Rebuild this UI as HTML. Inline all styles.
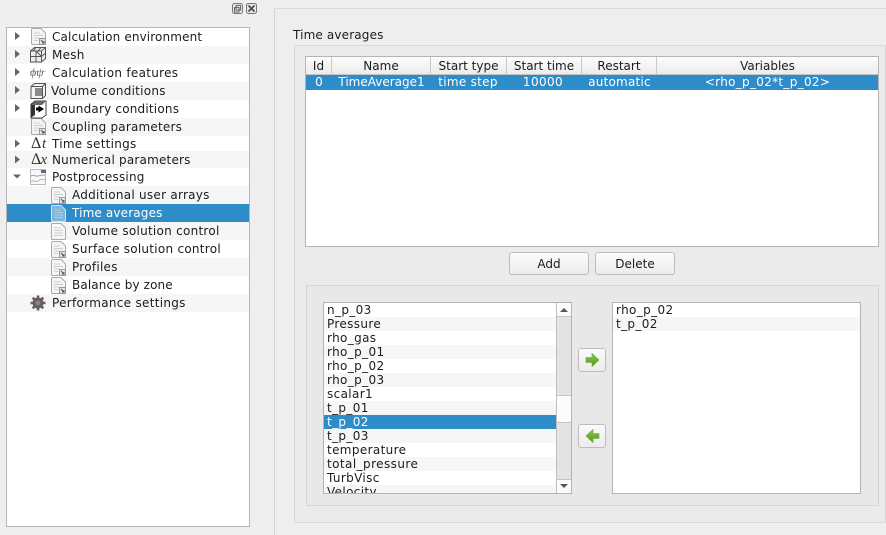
<!DOCTYPE html>
<html>
<head>
<meta charset="utf-8">
<style>
html,body{margin:0;padding:0;overflow:hidden}
body{width:886px;height:535px;overflow:hidden;position:relative;background:#efefef;font-family:"DejaVu Sans",sans-serif;font-size:12px;color:#1c1c1c}
.a{position:absolute;box-sizing:border-box}
.t{position:absolute;white-space:pre;line-height:14px;letter-spacing:.27px}
.r{position:absolute;left:0;right:0;height:18px}
.alt{background:#f6f6f6}
.sel{background:#2e8cc8;color:#fff}
.h{position:absolute;top:0;height:18px;border-right:1px solid #c8c8c8;text-align:center;line-height:18px;box-sizing:border-box}
.c{position:absolute;top:0;height:14px;text-align:center;line-height:14px;color:#fff;white-space:pre}
.btn{position:absolute;box-sizing:border-box;border:1px solid #bcbcbc;border-radius:3px;background:linear-gradient(#fbfbfb,#ececec);text-align:center;line-height:23px}
.li{position:absolute;left:0;right:0;height:14px;line-height:14px;padding-left:3px;white-space:pre;letter-spacing:.36px}
svg{position:absolute;display:block}
</style>
</head>
<body>
<!-- dock buttons -->
<svg style="left:232px;top:3px" width="26" height="12" viewBox="0 0 26 12"><rect x="0.5" y="0.5" width="10" height="10" rx="2" fill="#e8e8e8" stroke="#777"/><rect x="4" y="2.5" width="4.5" height="4.5" fill="none" stroke="#666"/><rect x="2.5" y="4.5" width="4.5" height="4.5" fill="none" stroke="#666"/><rect x="14.5" y="0.5" width="10" height="10" rx="2" fill="#e8e8e8" stroke="#777"/><path d="M16.5 2.500l6 6M22.500 2.500l-6 6" stroke="#444" stroke-width="1.600"/></svg>

<!-- Tree -->
<div class="a" style="left:6px;top:27px;width:244px;height:500px;background:#fff;border:1px solid #b4b4b4;overflow:hidden">
<div class="r alt" style="top:18px"></div>
<div class="r alt" style="top:54px"></div>
<div class="r alt" style="top:90px"></div>
<div class="r alt" style="top:123px;height:17px"></div>
<div class="r alt" style="top:158px"></div>
<div class="r sel" style="top:176px"></div>
<div class="r alt" style="top:194px"></div>
<div class="r alt" style="top:230px"></div>
<div class="r alt" style="top:266px"></div>
</div>
<span class="t" style="left:52px;top:30px;letter-spacing:.13px">Calculation environment</span>
<span class="t" style="left:52px;top:48px">Mesh</span>
<span class="t" style="left:52px;top:66px;letter-spacing:.3px">Calculation features</span>
<span class="t" style="left:51px;top:84px">Volume conditions</span>
<span class="t" style="left:52px;top:102px;letter-spacing:.2px">Boundary conditions</span>
<span class="t" style="left:52px;top:120px;letter-spacing:.2px">Coupling parameters</span>
<span class="t" style="left:52px;top:137px">Time settings</span>
<span class="t" style="left:52px;top:153px;letter-spacing:.2px">Numerical parameters</span>
<span class="t" style="left:52px;top:170px;letter-spacing:.2px">Postprocessing</span>
<span class="t" style="left:72px;top:188px">Additional user arrays</span>
<span class="t" style="left:72px;top:206px;color:#fff;letter-spacing:.15px">Time averages</span>
<span class="t" style="left:72px;top:224px">Volume solution control</span>
<span class="t" style="left:72px;top:242px">Surface solution control</span>
<span class="t" style="left:72px;top:260px">Profiles</span>
<span class="t" style="left:72px;top:278px;letter-spacing:.13px">Balance by zone</span>
<span class="t" style="left:52px;top:296px;letter-spacing:.3px">Performance settings</span>

<!-- Tree icons -->
<svg style="left:0;top:0" width="262" height="320" viewBox="0 0 262 320">
<defs>
<g id="d"><path d="M1.500 .5h8.500l4.500 4.500v10.500a1 1 0 0 1-1 1h-12a1 1 0 0 1-1-1v-14a1 1 0 0 1 1-1z" fill="#f4f4f4" stroke="#aaa"/><path d="M3 5h6M3 7.500h9M3 10h5M3 12.500h4" stroke="#d0d0d0"/><rect x="8.500" y="10.500" width="6" height="6" fill="#e4e4e4" stroke="#999"/><path d="M10 12l3 3M13 13v2h-2" stroke="#555" fill="none"/></g>
</defs>
<g fill="#666">
<path d="M15 32l5 4-5 4zM15 50l5 4-5 4zM15 68l5 4-5 4zM15 86l5 4-5 4zM15 104l5 4-5 4zM15 139.500l5 4-5 4zM15 155.500l5 4-5 4z"/>
<path d="M13 174.500h8l-4 4z"/>
</g>
<use href="#d" x="31" y="28"/>
<use href="#d" x="31" y="118"/>
<!-- mesh -->
<g stroke="#555" fill="none"><path d="M30.500 51l4-3.500h11v11l-4 3.500h-11z" fill="#eee"/><path d="M30.500 51h11v11M41.500 51l4-3.500M30.500 56.500h11M36 51v11M41.500 56.500l4-3.500M33 51l3-3.500M38 51l3-3.500M36 51l5 5"/></g>
<!-- phi psi -->
<path d="M30 71.500h16" stroke="#ccc"/>
<text x="30" y="76" font-family="Liberation Serif,serif" font-style="italic" font-size="12" fill="#666">ϕψ</text>
<!-- volume -->
<path d="M34.500 83.500h11v12l-3 3h-11.500v-12z" fill="#f4f4f4" stroke="#555"/><path d="M31 86.500h11.500v12M42.500 86.500l3-3" fill="none" stroke="#555"/><rect x="35" y="88" width="7" height="8" fill="#8a8a8a"/>
<!-- boundary -->
<path d="M31 105l4-4h11v14l-4 3h-11z" fill="#fff" stroke="#444"/><path d="M30.500 104l4.500-3.500v14.500l-4.500 3z" fill="#333"/><path d="M31 105l4-4h11l-4 4z" fill="#666"/><path d="M36 107.500h2.500v-2l5.500 3.500-5.500 3.500v-2h-2.500z" fill="#000"/>
<!-- Delta t / x -->
<text x="31" y="148" font-family="Liberation Serif,serif" font-size="16" fill="#333">Δ</text><text x="42" y="148" font-family="Liberation Serif,serif" font-style="italic" font-size="15" fill="#333">t</text>
<text x="31" y="164" font-family="Liberation Serif,serif" font-size="16" fill="#333">Δ</text><text x="40.500" y="164" font-family="Liberation Serif,serif" font-style="italic" font-size="15" fill="#333">x</text>
<!-- postprocessing -->
<rect x="30.500" y="169.500" width="15" height="15" fill="#f8f8f8" stroke="#bbb"/><rect x="41" y="170" width="5" height="3" fill="#667"/><path d="M31 176c3-2 4 1 7 0s4-1 7-1" stroke="#9a9ad8" fill="none"/><path d="M31 182c3-3 4 1 7-1s4-2 7-1" stroke="#9c9" fill="none"/>
<use href="#d" x="51" y="187"/>
<path d="M52.500 205.500h8.500l4.500 4.500v10.500a1 1 0 0 1-1 1h-12a1 1 0 0 1-1-1v-14a1 1 0 0 1 1-1z" fill="#7eb6da" stroke="#cfe4f2"/><path d="M54 210h7M54 212.500h9M54 215h9M54 217.500h9" stroke="#aacde4"/>
<path d="M52.500 223.500h8.500l4.500 4.500v10.500a1 1 0 0 1-1 1h-12a1 1 0 0 1-1-1v-14a1 1 0 0 1 1-1z" fill="#f6f6f6" stroke="#aaa"/><path d="M54 228h7M54 230.500h9M54 233h9M54 235.500h9" stroke="#d0d0d0"/>
<use href="#d" x="51" y="241"/>
<use href="#d" x="51" y="259"/>
<use href="#d" x="51" y="277"/>
<!-- gear -->
<g fill="#665f5c"><circle cx="38" cy="303" r="5.500"/><g stroke="#665f5c" stroke-width="2.600"><path d="M38 295.500v15M30.500 303h15M32.700 297.700l10.600 10.600M43.300 297.700l-10.600 10.600"/></g></g><circle cx="38" cy="303" r="2.500" fill="#8a8482"/>
<!-- splitter dots -->
<path d="M262 268v1M262 271v1M262 274v1M262 277v1M262 280v1" stroke="#c4c4c4"/>
</svg>

<!-- Right pane -->
<div class="a" style="left:274px;top:8px;width:612px;height:527px;background:#eeeeee;border-left:1px solid #d4d4d4;border-top:1px solid #dcdcdc"></div>
<span class="t" style="left:293px;top:28px;letter-spacing:.15px">Time averages</span>
<div class="a" style="left:294px;top:45px;width:592px;height:478px;background:#ebebeb;border:1px solid #d8d8d8"></div>

<!-- Table -->
<div class="a" style="left:305px;top:56px;width:574px;height:191px;background:#fff;border:1px solid #b4b4b4">
<div class="a" style="left:0;top:0;right:0;height:18px;background:linear-gradient(#fdfdfd,#ececec);border-bottom:1px solid #c4c4c4">
<div class="h" style="left:0;width:26px">Id</div>
<div class="h" style="left:26px;width:99px">Name</div>
<div class="h" style="left:125px;width:76px">Start type</div>
<div class="h" style="left:201px;width:75px">Start time</div>
<div class="h" style="left:276px;width:75px">Restart</div>
<div class="h" style="left:351px;width:221px;border-right:0">Variables</div>
</div>
<div class="a sel" style="left:0;top:18px;right:0;height:15px">
<div class="c" style="left:0;width:26px">0</div>
<div class="c" style="left:26px;width:99px">TimeAverage1</div>
<div class="c" style="left:125px;width:74px;letter-spacing:.3px">time step</div>
<div class="c" style="left:201px;width:72px;letter-spacing:.4px">10000</div>
<div class="c" style="left:276px;width:75px;letter-spacing:.2px">automatic</div>
<div class="c" style="left:351px;width:221px;letter-spacing:.3px">&lt;rho_p_02*t_p_02&gt;</div>
</div>
</div>

<div class="btn" style="left:509px;top:252px;width:80px;height:23px">Add</div>
<div class="btn" style="left:595px;top:252px;width:80px;height:23px">Delete</div>

<!-- inner group -->
<div class="a" style="left:306px;top:285px;width:573px;height:221px;background:#e8e8e8;border:1px solid #d6d6d6"></div>

<!-- left list -->
<div class="a" style="left:323px;top:302px;width:249px;height:192px;background:#fff;border:1px solid #b4b4b4;overflow:hidden">
<div class="li" style="top:0;right:15px">n_p_03</div>
<div class="li alt" style="top:14px;right:15px">Pressure</div>
<div class="li" style="top:28px;right:15px">rho_gas</div>
<div class="li alt" style="top:42px;right:15px">rho_p_01</div>
<div class="li" style="top:56px;right:15px">rho_p_02</div>
<div class="li alt" style="top:70px;right:15px">rho_p_03</div>
<div class="li" style="top:84px;right:15px">scalar1</div>
<div class="li alt" style="top:98px;right:15px">t_p_01</div>
<div class="li sel" style="top:112px;right:15px">t_p_02</div>
<div class="li alt" style="top:126px;right:15px">t_p_03</div>
<div class="li" style="top:140px;right:15px">temperature</div>
<div class="li alt" style="top:154px;right:15px;letter-spacing:.43px">total_pressure</div>
<div class="li" style="top:168px;right:15px">TurbVisc</div>
<div class="li alt" style="top:182px;right:15px">Velocity</div>
<div class="a" style="right:0;top:0;width:15px;height:190px;background:#e3e3e3;border-left:1px solid #c0c0c0">
<div class="a" style="left:0;top:0;width:14px;height:14px;background:#fafafa;border-bottom:1px solid #c4c4c4"></div>
<div class="a" style="left:0;top:92px;width:14px;height:28px;background:#fcfcfc;border-top:1px solid #c4c4c4;border-bottom:1px solid #c4c4c4"></div>
<div class="a" style="left:0;top:176px;width:14px;height:14px;background:#fafafa;border-top:1px solid #c4c4c4"></div>
<svg style="left:0;top:0" width="14" height="190"><path d="M3 9h8l-4-4zM3 181h8l-4 4z" fill="#555"/></svg>
</div>
</div>

<!-- arrows -->
<div class="btn" style="left:578px;top:348px;width:28px;height:24px"></div>
<div class="btn" style="left:578px;top:424px;width:28px;height:24px"></div>
<svg style="left:578px;top:348px" width="28" height="100" viewBox="0 0 28 100">
<defs><linearGradient id="g" x1="0" y1="0" x2="0" y2="1"><stop offset="0" stop-color="#8fc84a"/><stop offset="1" stop-color="#4d9a1e"/></linearGradient></defs>
<path d="M8 9.500h6v-4l7 6.500-7 6.500v-4h-6z" fill="url(#g)" stroke="#6aa83a" stroke-width=".6"/>
<path d="M21 85.500h-6v-4l-7 6.500 7 6.500v-4h6z" fill="url(#g)" stroke="#6aa83a" stroke-width=".6"/>
</svg>

<!-- right list -->
<div class="a" style="left:612px;top:302px;width:249px;height:192px;background:#fff;border:1px solid #b4b4b4">
<div class="li" style="top:0">rho_p_02</div>
<div class="li alt" style="top:14px">t_p_02</div>
</div>
</body>
</html>
